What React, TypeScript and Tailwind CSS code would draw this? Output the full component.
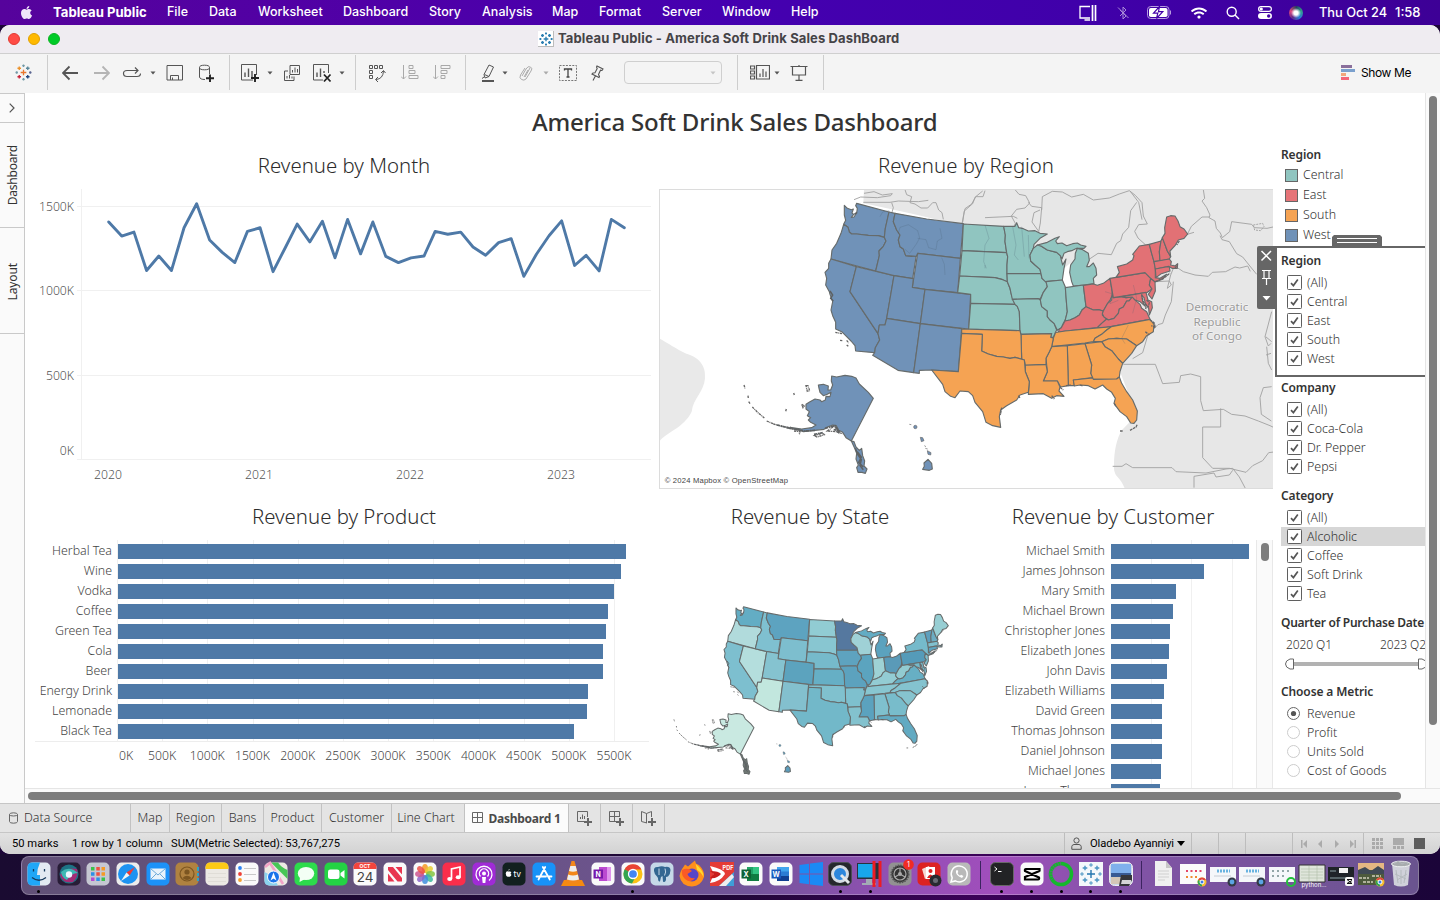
import React from "react";
import { FaApple, FaWifi } from "react-icons/fa";

const BODY = "font-['Noto_Sans',sans-serif]";

/* ---------- geography ---------- */
type Shape = { id: string; region: "W" | "C" | "E" | "S"; tone: string; pts: string };

const WEST: Shape[] = [
  { id: "WA", region: "W", tone: "#63adc4", pts: "313,61 322,70 334,74 340,72 336,84 341,88 334,97 342,96 350,84 352,70 347,62 350,55 447,81 436,130 433,157 415,152 385,151 350,147 335,147 328,141 324,127 311,118 317,106 313,90" },
  { id: "OR", region: "W", tone: "#b1dbdc", pts: "311,118 324,127 328,141 335,147 350,147 385,151 415,152 433,157 438,168 430,184 417,198 418,212 407,258 273,222 276,195 290,175 303,145" },
  { id: "CA", region: "W", tone: "#7dbfcf", pts: "273,222 349,245 330,320 414,446 419,465 406,488 404,503 347,498 345,482 333,468 320,455 305,440 287,432 287,412 278,392 273,375 278,350 270,328 268,320 257,300 260,280 255,262 266,250 266,235" },
  { id: "NV", region: "W", tone: "#b4dedd", pts: "349,245 462,272 440,400 435,420 418,420 414,446 330,320" },
  { id: "ID", region: "W", tone: "#7fc0d0", pts: "447,81 465,85 460,110 470,135 480,150 475,165 480,185 490,192 497,212 515,214 529,210 518,281 462,272 407,258 418,212 417,198 430,184 438,168 433,157 436,130" },
  { id: "MT", region: "W", tone: "#5da3c0", pts: "465,85 560,102 670,116 661,220 533,205 529,214 497,212 490,192 480,185 475,165 480,150 470,135 460,110" },
  { id: "WY", region: "W", tone: "#7dbece", pts: "533,205 661,220 653,323 555,313 517,307" },
  { id: "UT", region: "W", tone: "#85c3d0", pts: "462,272 520,281 517,307 555,313 541,416 440,400" },
  { id: "CO", region: "W", tone: "#5ca3be", pts: "555,313 692,328 686,432 541,416" },
  { id: "AZ", region: "W", tone: "#c2e7de", pts: "440,400 541,416 521,563 474,556 398,511 404,503 406,488 419,465 414,446 418,420 435,420" },
  { id: "NM", region: "W", tone: "#83c0ce", pts: "541,416 665,431 655,560 575,555 538,556 538,565 521,563" },
  { id: "AK", region: "W", tone: "#c9e9e1", pts: "275,573 290,576 315,571 335,574 348,579 358,597 385,622 400,640 334,768 318,758 308,742 296,736 289,722 278,720 262,726 252,733 225,736 190,740 165,730 150,727 185,732 215,728 228,720 212,712 205,705 212,698 202,692 208,680 198,672 198,658 210,650 225,642 240,645 245,650 256,645 258,634 270,635 273,622 262,628 250,632 240,622 237,610 235,600 250,598 265,603 264,615 272,615 278,600 274,588" },
  { id: "AK2", region: "W", tone: "#6f7773", pts: "334,768 342,770 348,786 358,796 365,790 368,812 374,828 372,843 381,852 376,865 366,862 354,862 350,848 355,840 348,822 350,805 344,790" },
  { id: "HI", region: "W", tone: "#5b9dbd", pts: "564,823 575,835 577,852 568,856 548,853 553,844 552,834" },
];

const EAST: Shape[] = [
  { id: "ND", region: "C", tone: "#91ccd3", pts: "10,117 131,124 136,150 135,170 140,203 6,197" },
  { id: "SD", region: "C", tone: "#88c6d1", pts: "6,197 140,203 143,215 141,240 141,268 142,290 128,284 105,278 -1,273" },
  { id: "NE", region: "C", tone: "#76bacb", pts: "-1,273 105,278 128,284 142,290 150,310 154,328 165,358 32,355 32,328 -7,323" },
  { id: "KS", region: "C", tone: "#66afc5", pts: "32,355 165,358 172,364 178,380 180,437 26,432" },
  { id: "MN", region: "C", tone: "#55789f", pts: "131,124 165,124 170,113 176,128 190,131 205,138 225,137 240,145 262,147 240,160 222,178 220,190 210,210 212,228 225,240 240,253 243,266 141,266 141,240 143,215 140,203 135,170 136,150" },
  { id: "IA", region: "C", tone: "#5ea3bf", pts: "141,266 243,266 246,280 258,290 262,305 250,322 241,341 157,343 150,310 142,290" },
  { id: "MO", region: "C", tone: "#5ca2be", pts: "157,343 235,341 241,345 245,365 262,378 262,395 270,405 282,415 290,435 287,440 280,457 272,457 275,446 183,448 180,437 178,380 172,364 165,358" },
  { id: "WI", region: "C", tone: "#9fd1d6", pts: "220,190 232,180 243,183 262,195 290,202 301,212 304,225 308,240 318,222 312,250 307,285 256,290 246,280 243,266 240,253 225,240 212,228 210,210" },
  { id: "UP", region: "C", tone: "#63acc3", pts: "232,180 262,172 285,160 298,155 287,168 292,176 306,174 320,182 338,176 352,174 362,180 378,184 372,190 350,190 335,197 322,200 312,205 306,222 301,212 290,202 262,195 243,183" },
  { id: "MI", region: "C", tone: "#5ba2be", pts: "352,190 368,194 385,205 388,226 380,245 388,245 400,234 408,250 410,270 400,280 402,296 372,300 340,303 335,290 329,262 332,240 345,222 346,205" },
  { id: "IL", region: "C", tone: "#5ba4bf", pts: "258,290 307,285 316,306 320,360 322,380 317,402 310,415 304,428 292,436 282,415 270,405 262,395 262,378 245,365 241,345 250,322 262,305" },
  { id: "IN", region: "C", tone: "#9ed2d5", pts: "316,308 370,300 378,365 366,375 358,390 345,398 330,405 315,408 322,380 320,360" },
  { id: "OH", region: "E", tone: "#5a9ab8", pts: "370,301 400,297 412,301 430,295 450,280 458,330 450,345 443,355 430,378 415,374 400,375 378,365" },
  { id: "KY", region: "E", tone: "#93ccd3", pts: "378,365 400,375 415,374 430,378 427,390 440,402 425,415 412,428 316,438 295,442 298,432 304,428 315,408 330,405 345,398 358,390 366,375" },
  { id: "WV", region: "E", tone: "#92cbd1", pts: "457,322 460,338 486,335 498,338 517,336 507,348 500,348 490,366 478,372 475,385 462,400 445,405 432,396 427,386 430,378 443,355 455,345" },
  { id: "VA", region: "E", tone: "#67afc4", pts: "517,336 524,344 540,358 545,370 560,380 570,403 440,427 412,428 425,415 440,402 445,405 462,400 475,385 478,372 490,366 500,348 507,348" },
  { id: "PA", region: "E", tone: "#559bb9", pts: "450,280 468,277 555,263 572,280 568,300 576,312 562,322 460,338" },
  { id: "NY", region: "E", tone: "#75bacb", pts: "468,277 478,262 472,245 500,237 518,225 522,212 518,208 538,183 568,178 575,205 582,230 586,252 586,278 600,280 620,268 608,283 585,291 572,280 555,263" },
  { id: "NJ", region: "E", tone: "#80c0ce", pts: "572,280 585,291 586,318 576,342 565,328 576,312 568,300" },
  { id: "MD", region: "E", tone: "#75b9c9", pts: "486,335 558,322 564,345 575,350 577,368 568,390 566,370 556,355 552,338 545,330 548,350 556,364 540,350 524,344 517,336 498,338" },
  { id: "VT", region: "E", tone: "#5d9fbd", pts: "568,178 603,168 598,200 600,228 582,230 575,205" },
  { id: "NH", region: "E", tone: "#6cadc3", pts: "603,168 607,158 622,198 632,215 628,222 600,228 598,200" },
  { id: "ME", region: "E", tone: "#97ced3", pts: "607,158 615,145 614,128 620,96 632,92 645,93 654,108 660,125 672,132 683,147 672,160 655,165 645,182 630,198 632,215 622,198" },
  { id: "MA", region: "E", tone: "#80c0ce", pts: "582,230 628,222 634,230 632,240 645,243 653,236 652,250 636,250 626,244 586,252" },
  { id: "CT", region: "E", tone: "#5ea4bf", pts: "586,252 618,246 628,246 630,258 604,266 588,278" },
  { id: "TN", region: "S", tone: "#88c6d0", pts: "287,442 316,438 454,425 440,435 425,448 405,460 400,470 375,474 275,485 280,460" },
  { id: "NC", region: "S", tone: "#84c3cf", pts: "454,425 570,403 582,418 580,440 560,452 548,470 530,482 500,462 470,460 445,462 425,470 400,470 405,460 425,448 440,435" },
  { id: "SC", region: "S", tone: "#86c4cf", pts: "425,470 445,462 470,460 500,462 530,482 515,505 488,535 475,522 455,497 435,485" },
  { id: "GA", region: "S", tone: "#78bccb", pts: "375,476 425,470 435,485 455,497 475,522 488,535 480,560 478,576 470,582 398,583 392,565 395,540" },
  { id: "AL", region: "S", tone: "#7fc0ce", pts: "322,482 375,476 395,540 392,565 398,578 340,585 343,602 330,602 325,602" },
  { id: "MS", region: "S", tone: "#5ba2be", pts: "275,485 322,482 325,602 302,606 292,588 250,588 262,560 258,520 268,500" },
  { id: "FL", region: "S", tone: "#62aac2", pts: "340,585 398,579 400,583 470,582 478,576 485,595 500,620 518,645 532,678 530,705 522,715 512,714 500,695 480,680 462,655 466,640 455,622 440,612 428,600 405,612 385,602 360,600 343,603" },
  { id: "LA", region: "S", tone: "#83c2ce", pts: "196,540 258,538 262,560 250,588 292,588 300,606 297,618 312,634 290,632 275,640 250,626 205,628 208,590 196,560" },
  { id: "AR", region: "S", tone: "#7ec0ce", pts: "183,448 275,446 272,457 280,460 275,485 268,500 258,520 258,538 196,540 193,525 185,522" },
  { id: "OK", region: "S", tone: "#80c1ce", pts: "5,432 180,437 183,450 185,522 165,517 150,520 130,516 110,514 85,507 65,498 67,448 5,445" },
  { id: "TX", region: "S", tone: "#72b8c9", pts: "5,445 67,448 65,498 85,507 110,514 130,516 150,520 165,517 193,525 196,560 208,590 205,622 180,630 170,645 140,662 122,675 118,695 122,727 98,722 78,712 68,680 45,652 38,632 25,620 0,618 -15,638 -28,634 -45,620 -52,598 -85,555 -5,560" },
];

const REGION = { W: "#7092b8", C: "#90c5c0", E: "#e27175", S: "#f5a353" };

function Islands({ fill }: { fill: string }) {
  return (
    <g fill={fill} stroke="#666" strokeWidth="2">
      <circle cx="526" cy="726" r="5" />
      <path d="M508,718l6,1M541,757l7,1l4,9l-8,3zM553,782l5,3M556,790l7,2M562,797l11,6l-1,7l-8,-2z" />
      <path d="M12,600l3,10M24,632l1,8M26,650l5,7M37,666l18,18l18,15M80,708l24,10M100,717l30,7l28,6M140,728l40,8M162,738l18,2l-2,8M198,602l6,0l5,15l-7,2zM161,624l2,6M139,672l-2,7M185,658l8,5l-4,5zM223,752l25,-8l5,5l-22,7zM262,738l20,-14l20,20l-15,-4zM286,442l20,4M300,466l8,1M320,466l6,8M320,480l5,4" fill="none" strokeWidth="4" strokeDasharray="7 2 3 2" />
    </g>
  );
}

function StateShapes({ byRegion }: { byRegion: boolean }) {
  const draw = (s: Shape) => (
    <polygon key={s.id} points={s.pts} fill={byRegion ? REGION[s.region] : s.tone} stroke="#666b6b" strokeWidth={byRegion ? 3.4 : 5} strokeLinejoin="round" />
  );
  return (
    <>
      {WEST.map(draw)}
      <Islands fill={byRegion ? "#7092b8" : "#5b9dbd"} />
      <path d="M346,790l8,20l10,14l-4,18l10,12M352,800l12,16l-8,16l14,14M343,88l8,-6M270,318l8,12l-6,10l8,8" fill="none" stroke="#5d6163" strokeWidth="4.500" />
      <path d="M110,720l40,10l45,8l30,-2M222,748l26,-5M255,730l30,-8l10,14l-14,-2M290,738l10,8" fill="none" stroke="#5d6163" strokeWidth="5" strokeDasharray="10 2 5 1" />
      <g transform="translate(660 0)">
        {EAST.map(draw)}
        <path d="M545,328l4,20l10,14l-2,10M560,345l8,8l-4,14M570,405l12,8l4,15l-12,-6M556,440l12,10M586,290l30,-14l14,-12M645,250l8,-12M658,168l-8,12M300,607l10,8M318,602l14,-2M360,600l8,3M125,668l-4,22M175,632l6,8M275,632l8,10M510,736l18,-10l4,-8M480,738l8,0M463,655l5,10" fill="none" stroke="#666" strokeWidth="4" strokeDasharray="8 2" />
      </g>
    </>
  );
}

function RegionMap() {
  return (
    <svg className="block h-[300px] w-[614px]" viewBox="-243 12 1842 900" preserveAspectRatio="none">
      <rect x="-243" y="12" width="1842" height="900" fill="#fff" />
      <path d="M-243,460 C-190,490 -180,500 -150,510 C-100,530 -105,570 -105,580 C-108,620 -140,640 -145,680 C-170,730 -220,740 -243,770Z" fill="#e9e9e9" />
      <g transform="translate(660 0)">
        <path d="M-288,12H940V912H495C480,870 460,880 462,840C462,800 470,760 486,735L530,690L482,565L480,540L400,320L300,290L0,120L-150,85L-240,65L-290,55Z" fill="#e7e7e7" />
        <path d="M313,250L330,235L345,303L320,308L307,285Z" fill="#fff" />
        <g fill="none" stroke="#a3a3a3" strokeWidth="2.800" strokeLinejoin="round">
          <path d="M-288,25l30,-5l25,10l30,-4l-5,6l-40,6l-50,-2l-20,8M-290,52l80,0l25,-4l60,2l30,-4M-165,14l5,15l15,6l-5,18l15,4l18,12l20,0l15,-16l10,0l8,22l10,8l4,20M-205,53l5,15l-6,20M75,17l-6,18l-22,0l-12,22l-20,14l-4,18l-6,34M8,112l5,-34l25,-22l8,-20l22,-18M165,14l12,14l20,4l12,22l-14,15l-25,4l-16,20l12,22l-6,14M205,52l10,12l30,4l-4,46l-5,26" />
          <path d="M245,75l2,-40l30,-16l30,2l28,15l35,-8l30,17l48,-6l30,-12l30,-10l18,14l20,22l4,40l12,24l-26,2l-12,20l10,20l22,20l6,20M510,18l26,34l10,52M530,52l-18,25l-6,50l-18,20l-6,20l-12,8l-16,34l-40,-4l-30,20M240,75l-18,8l-6,28l20,28M75,98l85,-4l12,6" />
          <path d="M730,14l4,26l-8,8l14,20l10,22l-3,8l18,10l4,22l12,14l6,14l22,-18l6,-30l60,8l8,10l38,2l18,-4M748,96l-22,0l-32,28l-12,24l20,-6M780,152l6,12l22,6l22,36l18,10l24,30l18,22M640,240l30,20l35,10l40,4l12,-12l40,-2l28,-14l14,3l24,-6l8,16M640,250l-8,20l-10,40l12,-10l-6,-12l-40,2M640,290l-6,60l-18,40l-8,25l-14,4l-30,30l-16,54l-30,18" />
          <path d="M880,120l28,-5l4,10l-10,12l-18,-2z" strokeDasharray="6 3" />
          <path d="M490,538h96l22,58l50,-4l4,-20l30,-5l30,8v72l8,30l60,-4l25,15l40,5l40,15l35,14l25,12v20M782,670v56h-54v92l30,32l50,0l50,12l20,-20l30,-15l18,-24l15,-2M458,844l28,0l12,-8l20,12h118l12,12l90,4l60,-12l20,-2l20,26l18,34M702,908v-34l60,-10l6,12l40,-6l10,-14M935,380l-20,75l10,28l8,-8M917,455l18,15M920,485l5,50l10,20M918,510l15,-5M935,605l-25,3l-10,30l4,50l30,20" />
        </g>
      </g>
      <StateShapes byRegion />
      <g fill="none" stroke="#4b5e74" strokeOpacity=".28" strokeWidth="2.400">
        <path d="M475,145l5,-18l25,-8l28,18l6,22l-10,18l-20,28l-14,-12M533,160l25,4l8,24l22,6l4,-26l14,-8l-6,-30M605,218l8,20l2,32M420,95l8,-14l20,-5" />
        <path d="M735,120l12,40l-12,20l-4,50l8,20M818,125l10,55l-5,30l12,15M845,125l8,90M865,150l2,70M735,240v10M1095,320l20,6l-5,30l25,-10M1180,300l10,40l-12,45M1165,420l-20,40l10,16" />
      </g>
      <g className="font-['Noto_Sans',sans-serif]" fill="#9b9b9b" stroke="#f3f3f3" strokeWidth="4" paintOrder="stroke" fontSize="35" textAnchor="middle">
        <text x="1431" y="379">Democratic</text>
        <text x="1431" y="422">Republic</text>
        <text x="1431" y="465">of Congo</text>
      </g>
      <rect x="-240" y="872" width="400" height="38" fill="#fff" fillOpacity=".75" />
      <text x="-226" y="893" fontSize="23" textLength="370" fill="#444" className="font-['Liberation_Sans',sans-serif]">© 2024 Mapbox © OpenStreetMap</text>
      <path d="M-243,13.5H1599M-243,910.5H1599M-241.5,12V912" stroke="#dcdcdc" strokeWidth="3" />
    </svg>
  );
}

function StateMap() {
  return (
    <svg className="block h-[200px] w-[300px]" viewBox="0 0 900 600">
      <g transform="translate(34.3 15.9) scale(.6186 .6205)">
        <StateShapes byRegion={false} />
      </g>
    </svg>
  );
}

/* ---------- charts ---------- */
function MonthLine() {
  return (
    <svg className="block h-[311px] w-[618px]" viewBox="35 179 618 311">
      <path d="M77,206.5H651M77,290.5H651M77,375.5H651M77,459.5H651M81.5,189V460" stroke="#f0f0f0" fill="none" />
      <g transform="translate(90 190) scale(.3603 .36285)">
        <polyline fill="none" stroke="#4e79a7" strokeWidth="8" strokeLinejoin="round" strokeLinecap="round" points="52,88 88,127 122,116 157,222 191,182 226,222 261,104 296,38 332,138 367,172 402,200 437,114 472,104 508,225 543,157 575,94 610,143 645,86 680,187 715,81 751,176 785,88 821,183 856,200 891,187 927,182 958,114 993,122 1029,116 1063,157 1098,180 1134,145 1169,134 1204,238 1239,177 1274,126 1309,85 1345,208 1377,180 1413,223 1447,81 1483,104" />
      </g>
      <g fontSize="12.200" fill="#555" className="font-['Noto_Sans',sans-serif] font-light">
        <g textAnchor="end">
          <text x="74" y="211">1500K</text>
          <text x="74" y="295">1000K</text>
          <text x="74" y="380">500K</text>
          <text x="74" y="455">0K</text>
        </g>
        <g textAnchor="middle">
          <text x="108" y="479">2020</text>
          <text x="259" y="479">2021</text>
          <text x="410" y="479">2022</text>
          <text x="561" y="479">2023</text>
        </g>
      </g>
    </svg>
  );
}

const PRODUCTS: [string, number][] = [["Herbal Tea", 508], ["Wine", 503], ["Vodka", 496], ["Coffee", 490], ["Green Tea", 488], ["Cola", 485], ["Beer", 485], ["Energy Drink", 470], ["Lemonade", 469], ["Black Tea", 456]];
const CUSTOMERS: [string, number][] = [["Michael Smith", 138], ["James Johnson", 93], ["Mary Smith", 65], ["Michael Brown", 62], ["Christopher Jones", 59], ["Elizabeth Jones", 58], ["John Davis", 56], ["Elizabeth Williams", 53], ["David Green", 51], ["Thomas Johnson", 51], ["Daniel Johnson", 51], ["Michael Jones", 50], ["James Thomas", 49]];
const TICKS = ["500K", "1000K", "1500K", "2000K", "2500K", "3000K", "3500K", "4000K", "4500K", "5000K", "5500K"];

function BarRow({ name, w, labelClass }: { name: string; w: number; labelClass: string }) {
  return (
    <div className="flex h-5 shrink-0 items-center">
      <span className={"shrink-0 whitespace-nowrap text-right text-[12.400px] font-light leading-5 text-[#444] " + labelClass}>{name}</span>
      <div className="h-[15px] bg-[#4e79a7]" style={{ width: w }} />
    </div>
  );
}

function ChartTitle({ children }: { children: React.ReactNode }) {
  return <h2 className="flex h-7 shrink-0 items-center justify-center whitespace-nowrap text-[20.400px] font-light text-[#2c2c2c]">{children}</h2>;
}

/* ---------- side filters ---------- */
function SideTitle({ children }: { children: React.ReactNode }) {
  return <div className="h-5 whitespace-nowrap text-[12px] font-semibold leading-5 tracking-[-.12px] text-[#333]">{children}</div>;
}

function Check({ label, active }: { label: string; active?: boolean }) {
  return (
    <div className={"flex h-[19px] items-center gap-[5px] pl-1.5 text-[12.400px] font-light text-[#333] " + (active ? "bg-[#d6d6d6]" : "")}>
      <svg className="size-[15px] shrink-0" viewBox="0 0 15 15">
        <rect x=".5" y=".5" width="14" height="14" rx=".8" fill="#fff" stroke="#5f5f5f" />
        <path d="M4,8.2L6.4,10.6L10.8,4.6" fill="none" stroke="#555" strokeWidth="1.7" />
      </svg>
      <span className="leading-[19px]">{label}</span>
    </div>
  );
}

function Radio({ label, on }: { label: string; on?: boolean }) {
  return (
    <div className="flex h-[19px] items-center gap-[7px] pl-1.5 text-[12.400px] font-light text-[#333]">
      <svg className="size-[13px] shrink-0" viewBox="0 0 13 13">
        <circle cx="6.5" cy="6.5" r="6" fill="#fff" stroke={on ? "#666" : "#ccc"} />
        {on && <circle cx="6.5" cy="6.5" r="2.6" fill="#555" />}
      </svg>
      <span className="leading-[19px]">{label}</span>
    </div>
  );
}

function Legend({ label, color }: { label: string; color: string }) {
  return (
    <div className="flex h-5 items-center gap-[5px] pl-1 text-[12.400px] font-light text-[#333]">
      <svg className="size-[13px]" viewBox="0 0 13 13"><rect x=".5" y=".5" width="12" height="12" fill={color} stroke="#666" /></svg>
      {label}
    </div>
  );
}

function Filters() {
  return (
    <aside className="flex w-[150px] shrink-0 flex-col pt-[52px]">
      <div className="pl-[6px]">
        <SideTitle>Region</SideTitle>
        <Legend label="Central" color="#90c5c0" />
        <Legend label="East" color="#e67478" />
        <Legend label="South" color="#f5a353" />
        <Legend label="West" color="#7092b8" />
      </div>
      <div className="relative mt-px h-[131px] border-y-2 border-l-2 border-[#666] bg-white pl-[4px] pt-[3px]">
        <svg className="absolute -left-[20px] -top-0.5 h-[63px] w-[20px]" viewBox="0 0 20 63">
          <path d="M2,0H20V63H2Q0,63 0,61V2Q0,0 2,0Z" fill="#666" />
          <path d="M4.500,5L14,14.500M14,5L4.500,14.500" stroke="#fff" strokeWidth="1.500" />
          <path d="M5,24.500H14M7,25V32.500M12,25V32.500M5,32.500H14M9.500,33V39" stroke="#fff" strokeWidth="1.200" fill="none" />
          <path d="M5.500,50H13.500L9.500,54.500Z" fill="#fff" />
        </svg>
        <svg className="absolute -top-[13px] left-[55px] h-[12px] w-[50px]" viewBox="0 0 50 12">
          <path d="M2,0H48L50,2V12H0V2Z" fill="#666" />
          <path d="M5,3.500H45M5,7.500H45" stroke="#fff" />
        </svg>
        <SideTitle>Region</SideTitle>
        <div className="pt-0.5">
          <Check label="(All)" /><Check label="Central" /><Check label="East" /><Check label="South" /><Check label="West" />
        </div>
      </div>
      <div className="overflow-hidden pl-[6px]">
        <div className="pt-px"><SideTitle>Company</SideTitle></div>
        <div className="pt-0.5"><Check label="(All)" /><Check label="Coca-Cola" /><Check label="Dr. Pepper" /><Check label="Pepsi" /></div>
        <div className="pt-2.5"><SideTitle>Category</SideTitle></div>
        <div className="pt-0.5"><Check label="(All)" /><Check label="Alcoholic" active /><Check label="Coffee" /><Check label="Soft Drink" /><Check label="Tea" /></div>
        <div className="pt-2.5 tracking-tight"><div className="h-5 whitespace-nowrap text-[12px] font-semibold leading-5 tracking-[-.25px] text-[#333]">Quarter of Purchase Date</div></div>
        <div className="mt-0.5 flex h-5 w-[150px] justify-between whitespace-nowrap pl-[5px] pr-[5px] text-[12px] font-light leading-5 tracking-[-.1px] text-[#333]"><span>2020 Q1</span><span>2023 Q2</span></div>
        <svg className="mt-[3px] block h-3 w-[144px]" viewBox="0 0 144 12">
          <path d="M9,6H140" stroke="#b2b2b2" strokeWidth="4" />
          <path d="M12.500,1V11H9Q4.500,9.500 4.500,6Q4.500,2.500 9,1ZM137.500,1V11H141Q146,9.500 146,6Q146,2.500 141,1Z" fill="#fff" stroke="#666" />
        </svg>
        <div className="pt-[12px]"><SideTitle>Choose a Metric</SideTitle></div>
        <div className="pt-0.5"><Radio label="Revenue" on /><Radio label="Profit" /><Radio label="Units Sold" /><Radio label="Cost of Goods" /></div>
      </div>
    </aside>
  );
}

/* ---------- mac menu bar ---------- */
function MenuBar() {
  return (
    <header className="flex h-[25px] shrink-0 items-center bg-[linear-gradient(90deg,#56039c_0%,#5000a6_25%,#4500b0_50%,#4000aa_75%,#3d0096_100%)] font-['Inter',sans-serif] text-[12.500px] font-medium text-white">
      <FaApple className="ml-[19px] size-[15px] text-[#f0e6fa]" />
      <span className="ml-[19px] w-[94px] whitespace-nowrap text-[13.100px] font-bold">Tableau Public</span>
      <span className="ml-5 w-[22px]">File</span>
      <span className="ml-5 w-[29px]">Data</span>
      <span className="ml-5 w-[65px]">Worksheet</span>
      <span className="ml-5 w-[66px]">Dashboard</span>
      <span className="ml-5 w-[33px]">Story</span>
      <span className="ml-5 w-[50px]">Analysis</span>
      <span className="ml-5 w-[27px]">Map</span>
      <span className="ml-5 w-[43px]">Format</span>
      <span className="ml-5 w-[40px]">Server</span>
      <span className="ml-5 w-[49px]">Window</span>
      <span className="ml-5 w-[29px]">Help</span>
      <svg className="ml-auto h-4 w-[18px]" viewBox="0 0 18 16" fill="none" stroke="#fff" strokeWidth="1.300"><path d="M11,1.500H1V13H11M5.500,15H11" /><path d="M13.500,0V16M16.500,0V16" strokeWidth="1.700" /></svg>
      <svg className="ml-[20px] h-[14px] w-3" viewBox="0 0 12 14" fill="none" stroke="#a98bd8" strokeWidth="1"><path d="M3,4L9,10L6,13V1L9,4L3,10M1,1.500L11.500,12" /></svg>
      <svg className="ml-[18px] h-[13px] w-[25px]" viewBox="0 0 25 13"><rect x=".5" y=".5" width="21.500" height="12" rx="3.200" fill="none" stroke="#b79be0" /><rect x="2" y="2" width="18.500" height="9" rx="1.800" fill="#fff" /><path d="M12.500,.5L6.500,7.200H10.800L9.500,12.500L15.800,5.600H11.500Z" fill="#fff" stroke="#4300a8" strokeWidth="1.200" /><path d="M23.500,4.500V8.500" stroke="#b79be0" /></svg>
      <FaWifi className="ml-[19px] size-[16px]" />
      <svg className="ml-[19px] size-[14px]" viewBox="0 0 14 14" fill="none" stroke="#fff" strokeWidth="1.400"><circle cx="5.700" cy="5.700" r="4.500" /><path d="M9,9L13,13" /></svg>
      <svg className="ml-[18px] h-[13px] w-[14px]" viewBox="0 0 14 13"><rect x=".6" y=".6" width="12.800" height="4.800" rx="2.400" fill="none" stroke="#fff" strokeWidth="1.200" /><circle cx="3.300" cy="3" r="1.600" fill="#fff" /><rect y="7" width="14" height="6" rx="3" fill="#fff" /><circle cx="10.700" cy="10" r="1.700" fill="#4100a5" /></svg>
      <span className="ml-[17px] size-[14px] rounded-full bg-[radial-gradient(circle_at_50%_50%,#fff_0_20%,transparent_50%),conic-gradient(#203f60,#33a28e,#2c79d7,#622d8a,#e0477f,#31405c)]" />
      <span className="ml-[16px] w-[69px] whitespace-nowrap text-[12.800px]">Thu Oct 24</span>
      <span className="mr-[17px] ml-[7px] w-[28px] text-[13px]">1:58</span>
    </header>
  );
}

/* ---------- toolbar ---------- */
const Caret = ({ className }: { className: string }) => (
  <svg className={"h-[4px] w-[6px] " + className} viewBox="0 0 6 4"><path d="M.5,.5H5.500L3,3.600Z" fill="currentColor" /></svg>
);
const Sep = ({ className }: { className: string }) => <span className={"h-[35px] w-px bg-[#cdcdcd] " + className} />;

function Plus({ x, y, s, c }: { x: number; y: number; s: number; c: string }) {
  return <path d={`M${x - s},${y}H${x + s}M${x},${y - s}V${y + s}`} stroke={c} />;
}

function TableauMark({ className, mono }: { className: string; mono?: boolean }) {
  const c = (v: string) => (mono ? "#2d7fb2" : v);
  return (
    <svg className={className} viewBox="0 0 18 18" strokeWidth={mono ? 1.8 : 1.4}>
      <Plus x={9} y={9} s={3} c={c("#e8762c")} />
      <Plus x={4.500} y={4.500} s={1.900} c={c("#eb9129")} /><Plus x={13.500} y={4.500} s={1.900} c={c("#59879b")} />
      <Plus x={4.500} y={13.500} s={1.900} c={c("#c72037")} /><Plus x={13.500} y={13.500} s={1.900} c={c("#1f447e")} />
      <Plus x={9} y={1.800} s={1.300} c={c("#7199a6")} /><Plus x={9} y={16.200} s={1.300} c={c("#7199a6")} />
      <Plus x={1.800} y={9} s={1.300} c={c("#7199a6")} /><Plus x={16.200} y={9} s={1.300} c={c("#5b6591")} />
    </svg>
  );
}

function Toolbar() {
  return (
    <div className="flex h-10 shrink-0 items-center border-t border-[#cfcfcf] bg-[#f4f4f4] pb-[2px] text-[#555]">
      <TableauMark className="ml-[15px] size-[17px]" />
      <Sep className="ml-[15px]" />
      <svg className="ml-[14px] h-4 w-4" viewBox="0 0 16 16" fill="none" stroke="#555" strokeWidth="1.800"><path d="M1,8H16M7.500,1.500L1,8L7.500,14.500" /></svg>
      <svg className="ml-4 h-4 w-4" viewBox="0 0 16 16" fill="none" stroke="#b4b4b4" strokeWidth="1.800"><path d="M0,8H15M8.500,1.500L15,8L8.500,14.500" /></svg>
      <svg className="ml-3 h-3 w-5" viewBox="0 0 20 12" fill="none" stroke="#555" strokeWidth="1.200"><path d="M16,3.500H5Q1.500,3.500 1.500,6.500T5,9.500H15Q18.500,9.500 18.500,6.500M13,.5L16,3.500L13,6.500" /></svg>
      <Caret className="ml-[8px]" />
      <svg className="ml-[10px] size-[17px]" viewBox="0 0 17 17" fill="none" stroke="#555"><path d="M1,1.500H16.500V16H1ZM4.500,16V11.500H12.500V16M6.500,13.500V16" /></svg>
      <svg className="ml-[15px] h-[18px] w-[17px]" viewBox="0 0 17 18" fill="none" stroke="#555"><ellipse cx="6.500" cy="3.500" rx="5" ry="2.300" /><path d="M1.500,3.500V13Q2,15.500 7,15.500M11.500,3.500V10" /><path d="M12,10.500V18M8,14.200H16" strokeWidth="1.900" stroke="#222" /></svg>
      <Sep className="ml-[14px]" />
      <svg className="ml-[10px] size-[20px]" viewBox="0 0 20 20" fill="none" stroke="#555"><path d="M13,17H1.500V1.500H16.500V12" /><path d="M5,14V9.500M8.500,14V5.500M12,14V8" strokeWidth="1.400" /><path d="M15,11V19M11,15H19" strokeWidth="1.900" stroke="#222" /></svg>
      <Caret className="ml-[7px]" />
      <svg className="ml-[10px] size-[18px]" viewBox="0 0 18 18" fill="none" stroke="#555"><path d="M7,1.500H16.500V10.500H7ZM5,7H1.500V16.500H11V12.500M9.500,8.500V6M12,8.500V3.500M14.500,8.500V5M4,14.500V12M6.500,14.500V11M9,14.500V12.500" /></svg>
      <svg className="ml-[11px] size-[20px]" viewBox="0 0 20 20" fill="none" stroke="#555"><path d="M11,17H1.500V1.500H16.500V10" /><path d="M5,14V9.500M8.500,14V5.500M12,10V8" strokeWidth="1.400" /><path d="M12,11.500L18.500,18.500M18.500,11.500L12,18.500" strokeWidth="1.800" stroke="#222" /></svg>
      <Caret className="ml-[7px]" />
      <Sep className="ml-[10px]" />
      <svg className="ml-3 size-[18px]" viewBox="0 0 18 18" fill="none" stroke="#555"><path d="M1.500,1.500h3v3h-3zM6.500,1.500h3v3h-3zM11.500,1.500h3v3h-3zM1.500,6.500h3v3h-3zM1.500,11.500h3v3h-3zM8,15.500Q15,15 15.500,7M13,9L15.500,6.500L17.500,9M10,13L7.500,15.500L10,18" /></svg>
      <svg className="ml-[15px] size-[18px]" viewBox="0 0 18 18" fill="none" stroke="#a9a9a9"><path d="M2.500,1V15M0,12.500L2.500,15L5,12.500M8,1.500h4v3h-4zM8,6.500h6v3h-6zM8,11.500h9v3h-9z" /></svg>
      <svg className="ml-[14px] size-[18px]" viewBox="0 0 18 18" fill="none" stroke="#a9a9a9"><path d="M2.500,1V15M0,12.500L2.500,15L5,12.500M8,1.500h9v3h-9zM8,6.500h6v3h-6zM8,11.500h4v3h-4z" /></svg>
      <Sep className="ml-[14px]" />
      <svg className="ml-[15px] h-[18px] w-[14px]" viewBox="0 0 14 18" fill="none" stroke="#555"><path d="M8,1L12.500,3L8,12.500L4,14L3,10.500ZM3.500,10.500L8,12.500M1,14.500L3,13" /><path d="M1,17H13" strokeWidth="1.800" /></svg>
      <Caret className="ml-[7px]" />
      <svg className="ml-[11px] h-[16px] w-[14px]" viewBox="0 0 14 16" fill="none" stroke="#aaa"><path d="M3,11L7,4Q9,.5 11.500,2T12,6L7,14Q5,16 2.500,14.500T1.500,10L6,3M5,12L9,5M11,3L6,12" /></svg>
      <Caret className="ml-[10px] text-[#aaa]" />
      <svg className="ml-[10px] h-[16px] w-[18px]" viewBox="0 0 18 16" fill="none" stroke="#777"><rect x=".5" y=".5" width="17" height="15" strokeDasharray="2 1.200" /><path d="M5.500,5.500V4H12.500V5.500M9,4V12M7.500,12H10.500" stroke="#444" strokeWidth="1.300" /></svg>
      <svg className="ml-[13px] h-[16px] w-[15px]" viewBox="0 0 15 16" fill="none" stroke="#555" strokeWidth="1.100"><path d="M7,1L13,4L12,5.500L10.500,5.200L8.500,9.500L9.500,11.500L9,12.500L2,9L3,8L5,7.800L7.200,3.500L6.500,2ZM5.500,10.800L3,15.500" /></svg>
      <div className="ml-[19px] flex h-[23px] w-[98px] items-center rounded-sm border border-[#cfcfcf]"><Caret className="ml-auto mr-[5px] text-[#c5c5c5]" /></div>
      <Sep className="ml-[15px]" />
      <svg className="ml-3 h-[15px] w-5" viewBox="0 0 20 15" fill="none" stroke="#555"><path d="M.5,1h4v3h-4zM.5,6h4v3h-4zM.5,11h4v3h-4zM6.500,.5h13v13.500h-13zM10,12V8.500M13,12V4M16,12V6.500" strokeWidth="1.200" /></svg>
      <Caret className="ml-1" />
      <svg className="ml-[10px] h-[16px] w-[18px]" viewBox="0 0 18 16" fill="none" stroke="#555" strokeWidth="1.200"><path d="M.5,1.500H17.500M2.500,1.500V10H15.500V1.500M9,0V1.500M9,10V15M5.500,15.300H12.500" /></svg>
      <Sep className="ml-[15px]" />
      <svg className="ml-auto h-[15px] w-[14px]" viewBox="0 0 14 15"><path d="M0,0H11V3H0Z" fill="#8a6f9b" /><path d="M0,4H14V7H0Z" fill="#7ba0cd" /><path d="M0,8H5V11H0Z" fill="#f2a77d" /><path d="M0,12H8V15H0Z" fill="#f4667a" /></svg>
      <span className="mr-[29px] ml-[6px] w-[50px] whitespace-nowrap font-['Inter',sans-serif] text-[12px] tracking-[-.4px] text-black">Show Me</span>
    </div>
  );
}

/* ---------- worksheet tabs ---------- */
function Tabs() {
  const tab = "flex h-full items-center justify-center whitespace-nowrap border-r border-[#c2c2c2] pt-px ";
  return (
    <div className="flex h-[30px] shrink-0 items-center border-y border-[#c6c6c6] bg-[#e4e4e4] text-[12.400px] font-light text-[#333]">
      <div className="flex h-full w-[131px] items-center gap-[6px] border-r border-[#c2c2c2] pl-[9px] pt-px">
        <svg className="mb-0.5 h-3 w-[9px]" viewBox="0 0 9 12" fill="none" stroke="#666"><path d="M.5,2.500Q.5,.8 4.500,.8T8.500,2.500V9.500Q8.500,11.200 4.500,11.200T.5,9.500ZM.5,2.500Q.5,4 4.500,4T8.500,2.500" /></svg>
        Data Source
      </div>
      <div className={tab + "w-[39px]"}>Map</div>
      <div className={tab + "w-[52px]"}>Region</div>
      <div className={tab + "w-[42px]"}>Bans</div>
      <div className={tab + "w-[58px]"}>Product</div>
      <div className={tab + "w-[70px]"}>Customer</div>
      <div className={tab + "w-[73px] pr-1"}>Line Chart</div>
      <div className={tab + "w-[104px] gap-[5px] bg-[#fbfbfb] text-[12px] font-bold tracking-[-.25px]"}>
        <svg className="mb-0.5 size-[11px]" viewBox="0 0 11 11" fill="none" stroke="#666"><path d="M.5,.5H10.500V10.500H.5ZM.5,5.500H10.500M5.500,.5V10.500" /></svg>
        <span className="text-[#4a4a4a]">Dashboard 1</span>
      </div>
      <div className={tab + "w-8"}><svg className="h-[15px] w-[16px]" viewBox="0 0 16 15" fill="none" stroke="#666"><path d="M7,10.500H.5V.5H10.500V6M3.500,8V6M5.500,8V3.500M7.500,8V5" /><path d="M11,7V15M7,11H15" strokeWidth="2" /></svg></div>
      <div className={tab + "w-8"}><svg className="h-[15px] w-[16px]" viewBox="0 0 16 15" fill="none" stroke="#666"><path d="M7,10.500H.5V.5H10.500V6M.5,5.500H10.500M5.500,.5V10.500" /><path d="M11,7V15M7,11H15" strokeWidth="2" /></svg></div>
      <div className={tab + "w-8"}><svg className="h-[15px] w-[16px]" viewBox="0 0 16 15" fill="none" stroke="#666"><path d="M6,12L.5,10.500V.5L5.500,2.500L10.500,.5V6M5.500,2.500V12" /><path d="M11,7V15M7,11H15" strokeWidth="2" /></svg></div>
    </div>
  );
}

function StatusBar() {
  const v = "h-full w-px shrink-0 bg-[#bdbdbd] ";
  return (
    <div className="flex h-[21px] shrink-0 items-center bg-[linear-gradient(#e2e2e2,#d2d2d2)] font-['Roboto',sans-serif] text-[11.200px] text-black">
      <span className="ml-3 w-[60px] whitespace-nowrap pt-px">50 marks</span>
      <span className="w-[99px] whitespace-nowrap pt-px">1 row by 1 column</span>
      <span className="whitespace-nowrap pt-px">SUM(Metric Selected): 53,767,275</span>
      <span className={v + "ml-auto"} />
      <svg className="ml-[6px] h-[13px] w-[11px] shrink-0" viewBox="0 0 11 13" fill="none" stroke="#555"><circle cx="5.500" cy="3.500" r="2.600" /><path d="M.8,12.300V9.500Q1,7.800 3,7.500H8Q10,7.800 10.200,9.500V12.300Z" /></svg>
      <span className="ml-[8px] w-[79px] shrink-0 whitespace-nowrap pt-px tracking-[-.1px]">Oladebo Ayanniyi</span>
      <svg className="ml-[8px] h-[5px] w-[8px] shrink-0" viewBox="0 0 8 5"><path d="M0,0H8L4,5Z" /></svg>
      <span className={v + "ml-[6px]"} /><span className={v + "ml-[26px]"} /><span className={v + "ml-[26px]"} /><span className={v + "ml-[46px]"} />
      <svg className="ml-2 h-2 w-[55px]" viewBox="0 0 55 8" fill="#ababab"><path d="M0,0H1.500V8H0ZM6,0V8L2,4ZM21,0V8L17,4ZM34,0V8L38,4ZM49,0V8L53,4ZM53.500,0H55V8H53.500Z" /></svg>
      <span className={v + "ml-[7px]"} />
      <svg className="ml-2 h-[11px] w-[11px]" viewBox="0 0 11 11" fill="#aaa"><path d="M0,0h3v3h-3zM4,0h3v3h-3zM8,0h3v3h-3zM0,4h3v3h-3zM4,4h3v3h-3zM8,4h3v3h-3zM0,8h3v3h-3zM4,8h3v3h-3zM8,8h3v3h-3z" /></svg>
      <svg className="ml-[10px] h-[11px] w-[11px]" viewBox="0 0 11 11" fill="#aaa"><path d="M0,0h11v7h-11zM0,8h3v3h-3zM4,8h3v3h-3zM8,8h3v3h-3z" /></svg>
      <span className="mr-[15px] ml-[10px] size-[11px] bg-[#5d5d5d]" />
    </div>
  );
}

/* ---------- dock ---------- */
const R = ({ f, s }: { f: string; s?: string }) => <rect x=".5" y=".5" width="23" height="23" rx="5" fill={f} stroke={s} />;

const DOCK: { art: React.ReactNode; run?: boolean; sepAfter?: boolean }[] = [
  { run: true, art: <><R f="#e3eaf2" /><path d="M5.500,.5H13Q10,7 10,13H13V23.500H5.500Q.5,23.500 .5,18.500V5.500Q.5,.5 5.500,.5Z" fill="#1fa7f7" /><path d="M6.500,7V9.500M17.500,7V9.500M5,15.500Q12,21 19,15.500" stroke="#173a5c" strokeWidth="1.300" fill="none" /></> },
  { art: <><R f="#271c36" /><circle cx="12" cy="12" r="9.500" fill="#1d7385" /><path d="M3,13Q8,5 20,7Q22,14 16,20Q6,22 3,13" fill="#a32c76" /><path d="M4,10Q12,3 21,11Q14,11 10,18Q5,16 4,10" fill="#3eb8b4" /><circle cx="12" cy="12.500" r="3.200" fill="#eaf6ff" /></> },
  { art: <><R f="#c5c7d2" /><path d="M5,5h3.500v3.500h-3.500zM15.500,15.500h3.500v3.500h-3.500z" fill="#3ac24a" /><path d="M10.300,5h3.500v3.500h-3.500zM10.300,10.200h3.500v3.500h-3.500z" fill="#ee5041" /><path d="M15.500,5h3.500v3.500h-3.500zM15.500,10.200h3.500v3.500h-3.500z" fill="#f49a25" /><path d="M5,10.200h3.500v3.500h-3.500zM10.300,15.500h3.500v3.500h-3.500z" fill="#2d8fe6" /><path d="M5,15.500h3.500v3.500h-3.500z" fill="#b44ad0" /></> },
  { art: <><R f="#ececec" /><circle cx="12" cy="12" r="10" fill="#1d93f1" /><path d="M19,5L13.500,13.500L10.500,10.500Z" fill="#f13b34" /><path d="M5,19L13.500,13.500L10.500,10.500Z" fill="#f4f4f4" /></> },
  { art: <><R f="#1c92f8" /><path d="M4.500,6.500H19.500V17.500H4.500Z" fill="#e9f3fb" /><path d="M4.500,6.500L12,13L19.500,6.500M4.500,17.500L10,12M19.500,17.500L14,12" fill="none" stroke="#6aa9d8" /></> },
  { art: <><R f="#b08240" /><path d="M23,5v4M23,11v3M23,16v3" stroke="#2aa4c8" strokeWidth="2" /><circle cx="12" cy="12" r="7" fill="none" stroke="#7c5621" strokeWidth="1.200" /><circle cx="12" cy="10" r="2.600" fill="#7c5621" /><path d="M7.500,16Q12,11.500 16.500,16Q12,20 7.500,16" fill="#7c5621" /></> },
  { art: <><R f="#ece9e4" /><path d="M.5,7V5.500Q.5,.5 5.500,.5H18.500Q23.500,.5 23.500,5.500V7Z" fill="#fcca16" /><path d="M3,11.500H21M3,15.500H21M3,19.500H21" stroke="#d8d5cf" strokeWidth=".6" /></> },
  { art: <><R f="#fafafa" /><circle cx="5" cy="6" r="1.900" fill="#2c84f5" /><circle cx="5" cy="12" r="1.900" fill="#ee4035" /><circle cx="5" cy="18" r="1.900" fill="#f7a12e" /><path d="M9,6.500H21M9,12.500H21M9,18.500H21" stroke="#c9c9c9" /></> },
  { art: <><R f="#eceae4" /><path d="M.5,10Q10,14 14,23.500H5Q.5,23 .5,19Z" fill="#8ad3ee" /><path d="M7,.5L23.500,17V8Q17,5 14,.5Z" fill="#48c656" /><path d="M1,5L6,1L19,22" stroke="#f2a3c7" strokeWidth="2.600" fill="none" /><circle cx="9.500" cy="15" r="6" fill="#1a73ea" stroke="#fff" /><path d="M9.500,10.500L12.500,18.500L9.500,16.500L6.500,18.500Z" fill="#fff" /></> },
  { art: <><R f="#2ddb4c" /><ellipse cx="12" cy="11.500" rx="8.200" ry="6.600" fill="#f3fff5" /><path d="M6,15L5.500,20L11,17Z" fill="#f3fff5" /></> },
  { art: <><R f="#24d344" /><rect x="4" y="7.500" width="11.500" height="9.500" rx="2.300" fill="#fff" /><path d="M16.500,11L20.500,8V16.500L16.500,13.500Z" fill="#fff" /></> },
  { art: <><R f="#fafafa" /><path d="M.5,7V5.500Q.5,.5 5.500,.5H18.500Q23.500,.5 23.500,5.500V7Z" fill="#f2453d" /><text x="12" y="5.800" fontSize="5" fontWeight="700" fill="#fff" textAnchor="middle" className="font-['Inter',sans-serif]">OCT</text><text x="12" y="20" fontSize="13.500" fill="#444" textAnchor="middle" className="font-['Inter',sans-serif]">24</text></> },
  { art: <><R f="#fafafa" /><path d="M5,5H10L19,16V19.500H14.500L5,8ZM12.500,5H19V12.500ZM5,11.500V19.500H11.500Z" fill="#e8354f" /></> },
  { art: <><R f="#fafafa" /><g fillOpacity=".85"><ellipse cx="12" cy="6.500" rx="3" ry="4.500" fill="#f59a23" /><ellipse cx="16" cy="8" rx="3" ry="4.500" transform="rotate(45 16 8)" fill="#e6cf33" /><ellipse cx="17.500" cy="12" rx="4.500" ry="3" fill="#84c441" /><ellipse cx="16" cy="16" rx="3" ry="4.500" transform="rotate(-45 16 16)" fill="#3bb99e" /><ellipse cx="12" cy="17.500" rx="3" ry="4.500" fill="#3e8ddd" /><ellipse cx="8" cy="16" rx="3" ry="4.500" transform="rotate(45 8 16)" fill="#8a65c9" /><ellipse cx="6.500" cy="12" rx="4.500" ry="3" fill="#cb568f" /><ellipse cx="8" cy="8" rx="3" ry="4.500" transform="rotate(-45 8 8)" fill="#ed5147" /></g></> },
  { art: <><R f="#fa2e4b" /><path d="M9.500,17V7L18,5V15" stroke="#fff" strokeWidth="1.700" fill="none" /><ellipse cx="7.700" cy="17" rx="2.500" ry="2" fill="#fff" /><ellipse cx="16.200" cy="15.200" rx="2.500" ry="2" fill="#fff" /></> },
  { art: <><R f="#a02bd6" /><g fill="none" stroke="#fff" strokeWidth="1.300"><path d="M7,18.500A8,8 0 1 1 17,18.500M8.500,14.500A4.600,4.600 0 1 1 15.500,14.500" /></g><circle cx="12" cy="11.500" r="2" fill="#fff" /><path d="M10,15H14L13.300,21H10.700Z" fill="#fff" /></> },
  { art: <><R f="#12201f" /><path d="M7.500,9.500q-1,.1 -1.300,-.1q-2.300,-.5 -2.500,2.100q.2,3 2,3.300q1,-.3 2,0q1.500,-.5 1.800,-2q-1.700,-1.100 -.1,-2.600q-.8,-.9 -1.900,-.7zM6.300,8.700q.1,-1.300 1.400,-1.700q0,1.400 -1.400,1.700z" fill="#fff" /><text x="15.300" y="15" fontSize="8.500" fill="#fff" textAnchor="middle" className="font-['Inter',sans-serif]">tv</text></> },
  { art: <><R f="#1892f8" /><path d="M13.200,5L6.500,17.500M10.800,5L17.800,17.500M4.500,14.500H14M16.500,14.500H19.500" stroke="#fff" strokeWidth="1.800" strokeLinecap="round" /></> },
  { art: <><path d="M3,18H21L24,24H0Z" fill="#f58a10" /><path d="M10.500,-1H13.500L19,20Q12,23 5,20Z" fill="#f3871a" /><path d="M9.300,4H14.700L16,9Q12,10.500 8,9ZM7.200,12.500Q12,14.500 16.800,12.500L18,17.500Q12,19.500 6,17.500Z" fill="#eee" /></> },
  { art: <><R f="#fafafa" /><path d="M8,5H20V19H8Z" fill="#bb4ad0" /><path d="M16,5H20V19H16Z" fill="#df93ec" /><path d="M2.500,7.500H12V16.500H2.500Z" fill="#7719aa" /><text x="7.200" y="14.700" fontSize="7" fontWeight="700" fill="#fff" textAnchor="middle" className="font-['Inter',sans-serif]">N</text></> },
  { run: true, art: <><R f="#fafafa" /><circle cx="12" cy="12" r="9.500" fill="#fbc116" /><path d="M12,12L3.500,7.500A9.500,9.500 0 0 1 20.500,7.500H12Z" fill="#e94335" /><path d="M12,12L3.700,7.300A9.500,9.500 0 0 0 11,21.500L15,14Z" fill="#34a551" /><circle cx="12" cy="12" r="4.500" fill="#4286f5" stroke="#fff" strokeWidth="1.300" /></> },
  { art: <><R f="#c6d9e8" /><path d="M4,9Q3.500,4.500 8,5Q12,3.500 15,5Q20,4 20.500,8Q20.500,12 18,14.500L16,15V18Q15,21 13,19.500L12.500,14L11,15L10,19.500Q8,20 8,16L7,14.500Q4.500,13 4,9Z" fill="#336791" /><path d="M9,6.500V13M15,6.500Q16.500,10 14.500,13.500" stroke="#c6d9e8" fill="none" /></> },
  { art: <><path d="M2,7Q4,4 5,2.500L8,4.500Q13,0 15,-1.500Q15,2 19,3Q25,9 24,15Q21,24 12,24.500Q1,24 -.5,14Q0,10 2,7Z" fill="#ff8f1c" /><path d="M15,-1.500Q15,2 18,4Q24,10 23.500,15Q21,10 17,8Z" fill="#ffdb2e" /><circle cx="12" cy="13" r="6.500" fill="#5845c8" /><path d="M2,8Q8,5 12,9L7.500,12Q9,17 15,16Q11,22 5,17Q1,13 2,8Z" fill="#fb5a26" /></> },
  { art: <><path d="M0,0H24V24H0Z" fill="#e53c35" /><path d="M0,4Q14,7 15,12Q10,20 0,21L4,12Z" fill="#fff" /><path d="M0,9Q9,9 11,12Q7,17 0,16L4,12Z" fill="#c81e1b" /><path d="M9,24L24,10V24Z" fill="#3f9ed8" /><path d="M9,24L22,12L24,15L16,24Z" fill="#eee" /><text x="18" y="7.500" fontSize="5.500" fontWeight="700" fill="#fff" textAnchor="middle" className="font-['Inter',sans-serif]">PDF</text></> },
  { art: <><R f="#fafafa" /><path d="M8,5H20V19H8Z" fill="#21a366" /><path d="M14,5H20V12H14Z" fill="#33c481" /><path d="M8,12H20V19H8Z" fill="#107c41" /><path d="M2.500,7.500H12V16.500H2.500Z" fill="#0d6235" /><text x="7.200" y="14.700" fontSize="7" fontWeight="700" fill="#fff" textAnchor="middle" className="font-['Inter',sans-serif]">X</text></> },
  { art: <><R f="#fafafa" /><path d="M8,5H20V19H8Z" fill="#2b7cd3" /><path d="M8,5H20V9.500H8Z" fill="#41a5ee" /><path d="M8,14H20V19H8Z" fill="#103f91" /><path d="M2.500,7.500H12V16.500H2.500Z" fill="#185abd" /><text x="7.200" y="14.700" fontSize="7" fontWeight="700" fill="#fff" textAnchor="middle" className="font-['Inter',sans-serif]">W</text></> },
  { art: <path d="M.5,3L10,1.700V11.500H.5ZM11,1.500L24,0V11.500H11ZM.5,12.500H10V22.300L.5,21ZM11,12.500H24V24L11,22.500Z" fill="#1b8af5" /> },
  { run: true, art: <><R f="#26282d" s="#4b4e55" /><circle cx="12" cy="12" r="7.500" fill="#2c86dc" stroke="#d4dbe4" strokeWidth="3" /><path d="M13,13L21,21" stroke="#e4e7ea" strokeWidth="3" /></> },
  { run: true, art: <><path d="M-1,1H22V17H-1Z" fill="#29323d" /><path d="M0,2H16V15.500H0Z" fill="#18a7ec" /><path d="M8,17H14V21H18V23H4V21H8Z" fill="#a3abb5" /><path d="M16,-1V25M22,-1V25" stroke="#ec1c24" strokeWidth="3" /></> },
  { art: <><R f="#929292" /><circle cx="12" cy="12" r="8.500" fill="#333" stroke="#555" strokeWidth="2" strokeDasharray="1.500 1" /><circle cx="12" cy="12" r="6" fill="none" stroke="#aaa" strokeWidth="1.200" /><circle cx="12" cy="12" r="2" fill="#aaa" /><path d="M12,12V6M12,12L7,15M12,12L17,15" stroke="#aaa" strokeWidth="1.200" /><circle cx="20.500" cy="2.500" r="5.300" fill="#f02b24" /><text x="20.500" y="5" fontSize="7" fill="#fff" textAnchor="middle" className="font-['Inter',sans-serif]">1</text></> },
  { art: <><R f="#dd2222" /><path d="M5,7L12,4L15,14L8,17Z" fill="#f5d8d4" /><rect x="9" y="5" width="9" height="12" fill="#fff" /><circle cx="13.500" cy="9" r="2" fill="#dd2222" /><path d="M10,16Q13.500,9 17,16Z" fill="#dd2222" /><circle cx="18.500" cy="18.500" r="6" fill="#282a2f" /><circle cx="18.500" cy="18.500" r="2.500" fill="#686a73" /></> },
  { sepAfter: true, art: <><R f="#b9b9b9" /><path d="M4,20L5.200,15.800A8,8 0 1 1 8.300,18.900Z" fill="none" stroke="#fff" strokeWidth="1.500" /><path d="M9,8.500Q8,13 15,16L16.500,14L14,12.700L13,13.700Q11,12.500 10.500,11L11.300,10L10.500,8Z" fill="#fff" /></> },
  { run: true, art: <><R f="#222325" s="#686868" /><path d="M4.500,5L7,7L4.500,9M8,9.500H11.500" stroke="#fff" fill="none" /></> },
  { run: true, art: <><R f="#fafafa" /><path d="M19.500,9.500V7H6Q4.500,7 5,9L19,15.500Q19.500,17.500 18,17.500H5V15L19.500,9" fill="none" stroke="#000" strokeWidth="2.200" /></> },
  { run: true, art: <><circle cx="12" cy="12" r="10.500" fill="none" stroke="#14b82c" strokeWidth="3.600" /><path d="M12,1.500A10.500,10.500 0 0 0 4,19" fill="none" stroke="#7a5794" strokeWidth="3.800" strokeDasharray=".5 2.200" /></> },
  { run: true, art: <><path d="M0,0H24V24H0Z" fill="#f4f8fb" /><g strokeWidth="1.400"><Plus x={12} y={12} s={4} c="#2376b0" /><Plus x={6} y={6} s={2.300} c="#4a93c2" /><Plus x={18} y={6} s={2.300} c="#4a93c2" /><Plus x={6} y={18} s={2.300} c="#4a93c2" /><Plus x={18} y={18} s={2.300} c="#4a93c2" /><Plus x={12} y={3} s={1.700} c="#69a6cd" /><Plus x={12} y={21} s={1.700} c="#69a6cd" /><Plus x={3} y={12} s={1.700} c="#69a6cd" /><Plus x={21} y={12} s={1.700} c="#69a6cd" /></g></> },
  { run: true, sepAfter: true, art: <><R f="#cbd9ec" s="#eee" /><path d="M2,2H22V13H2Z" fill="#7fb0ec" /><path d="M2,11H22V15H2Z" fill="#385a93" /><path d="M2,15H22V22H2Z" fill="#d4c7b7" /><path d="M12,13H23V18L20,24H10Z" fill="#35363b" /><path d="M13,18H22V22H12Z" fill="#d4d4d6" /></> },
  { art: <><path d="M4,-1H15L21,6V24H4Z" fill="#f0f0f0" /><path d="M15,-1V6H21Z" fill="#c7c7c7" /><path d="M7,9H18M7,12H18M7,15H18M7,18H14" stroke="#d0d0d0" /></> },
  { art: <><path d="M-1,2H25V22H-1Z" fill="#fbfbfb" /><path d="M5,9h2M9.500,9h2M14,9h2M18.500,9h2" stroke="#e44669" strokeWidth="2" /><path d="M5,15h2M9.500,15h2M14,15h2" stroke="#ef8b30" strokeWidth="2" /><circle cx="21" cy="20" r="4.500" fill="#f4bb2f" /><path d="M17,18A4.500,4.500 0 0 1 25,18Z" fill="#e0493f" /><path d="M17,18A4.500,4.500 0 0 0 21,24.500V20Z" fill="#34a551" /><circle cx="21" cy="20" r="2" fill="#3c7cea" stroke="#fff" /></> },
  { art: <><path d="M-1,5H25V20H-1Z" fill="#f5f7fa" /><path d="M6,9h13" stroke="#69b3e0" strokeWidth="3" strokeDasharray="2 1" /><path d="M3,14H20" stroke="#c6ccd4" /><circle cx="21" cy="20" r="4.500" fill="#343a46" /><circle cx="21" cy="20" r="2.400" fill="#5ba5e4" /></> },
  { art: <><path d="M-1,5H25V20H-1Z" fill="#f5f7fa" /><path d="M6,9h13" stroke="#69b3e0" strokeWidth="3" strokeDasharray="2 1" /><path d="M3,14H20" stroke="#c6ccd4" /><circle cx="21" cy="20" r="4.500" fill="#343a46" /><circle cx="21" cy="20" r="2.400" fill="#5ba5e4" /></> },
  { art: <><path d="M-1,5H25V20H-1Z" fill="#f5f7fa" /><path d="M2,9h20M2,14h14" stroke="#738c8d" strokeWidth="1.500" strokeDasharray="2 3" /><circle cx="21" cy="20" r="4" fill="none" stroke="#21bf3a" strokeWidth="2" /></> },
  { art: <><path d="M-1,3H25V20H-1Z" fill="#dfe5db" stroke="#333" /><path d="M1,7H23M1,10H23M1,13H23M1,16H23M9,4V19M17,4V19" stroke="#aebcaa" strokeWidth=".6" /><text x="14" y="25" fontSize="6" fill="#fff" textAnchor="middle" className="font-['Inter',sans-serif]">python...</text></> },
  { art: <><path d="M-1,5H25V19H-1Z" fill="#1f2429" /><path d="M10,6H19V11H10Z" fill="#f2f2f2" /><path d="M1,9H7M1,16H23" stroke="#8ca0a5" /><rect x="16" y="15" width="9" height="9" rx="2" fill="#f8f8f8" /><path d="M23,17.500h-5l5,4h-5l5,-3" stroke="#111" fill="none" /></> },
  { art: <><path d="M-1,1H25V23H-1Z" fill="#4d5a3c" /><path d="M-1,1H25V8H-1Z" fill="#e5b782" /><path d="M-1,8L6,5L12,9L19,4L25,8V12H-1Z" fill="#404a55" /><path d="M0,16h10M4,20h10M13,14h9" stroke="#d1cfbb" strokeWidth="1.500" strokeDasharray="3 1" /><circle cx="21" cy="20" r="4.500" fill="#f4bb2f" /><path d="M17,18A4.500,4.500 0 0 1 25,18Z" fill="#e0493f" /><path d="M17,18A4.500,4.500 0 0 0 21,24.500V20Z" fill="#34a551" /><circle cx="21" cy="20" r="2" fill="#3c7cea" stroke="#fff" /></> },
  { art: <><path d="M3,1H21L19,23Q12,26 5,23Z" fill="#dcdfe2" fillOpacity=".9" /><ellipse cx="12" cy="2" rx="9.500" ry="2.800" fill="#a7abad" stroke="#eef0f1" /><path d="M5,2l4,-3l4,3l4,-2l2,2M7,8L9,21M12,8V22M17,8L15,21M6,12L17,17M18,12L8,18" stroke="#b5babe" fill="none" /></> },
];

function Dock() {
  return (
    <div className="flex h-[46px] shrink-0 items-start bg-[linear-gradient(90deg,#1a0b31_0%,#200737_50%,#3b0258_68%,#20053c_85%,#1b0539_100%)] pt-[2px]">
      <div className="ml-[21px] flex h-[39px] w-[1398px] items-start rounded-lg border border-white/25 bg-[linear-gradient(90deg,#615077_0%,#65537d_30%,#72549a_52%,#9350b5_63%,#a14ebc_70%,#8353a8_78%,#6a548f_100%)] pl-[2px]">
        {DOCK.map((d, i) => (
          <React.Fragment key={i}>
            <div className="flex w-[29.690px] shrink-0 flex-col items-center pt-[5px]">
              <svg className="size-[24px] overflow-visible" viewBox="0 0 24 24">{d.art}</svg>
              <span className={"mt-[4px] size-[3px] rounded-full " + (d.run ? "bg-black" : "bg-transparent")} />
            </div>
            {d.sepAfter && <span className="mx-[6px] mt-1 h-7 w-px shrink-0 bg-[#3c2460]" />}
          </React.Fragment>
        ))}
      </div>
    </div>
  );
}

/* ---------- page ---------- */
export default function App() {
  return (
    <div className="flex h-[900px] w-[1440px] flex-col overflow-hidden bg-[#1d0638]">
      <MenuBar />
      <div className={"flex h-[829px] shrink-0 flex-col overflow-hidden rounded-[10px] bg-white " + BODY}>
        <div className="flex h-[28px] shrink-0 items-center bg-[#efecf1]">
          <span className="ml-2 size-3 rounded-full border border-[#e13a32] bg-[#ff4b45]" />
          <span className="ml-2 size-3 rounded-full border border-[#e0a000] bg-[#ffb900]" />
          <span className="ml-2 size-3 rounded-full border border-[#0db324] bg-[#00cb27]" />
          <span className="ml-[478px] flex size-[16px] items-center justify-center border-b border-r border-[#bbb] bg-white"><TableauMark className="size-[14px]" mono /></span>
          <span className="ml-[4px] whitespace-nowrap font-['Inter',sans-serif] text-[13px] font-bold tracking-[.12px] text-[#454347]">Tableau Public - America Soft Drink Sales DashBoard</span>
        </div>
        <Toolbar />
        <div className="flex h-[710px] shrink-0">
          <nav className="flex w-[25px] shrink-0 flex-col items-center border-r border-t border-[#c9c9c9] bg-[#fafafa] text-[12px] text-[#333]">
            <div className="flex h-[29px] w-full items-center justify-center border-b border-[#c9c9c9]"><svg className="h-[10px] w-[6px]" viewBox="0 0 6 10" fill="none" stroke="#555" strokeWidth="1.200"><path d="M.7,.7L5,5L.7,9.300" /></svg></div>
            <div className="flex h-[105px] w-full items-center justify-center border-b border-[#c9c9c9] pl-0.5"><span className="rotate-180 tracking-[-.2px] [writing-mode:vertical-rl]">Dashboard</span></div>
            <div className="flex h-[106px] w-full items-center justify-center border-b border-[#c9c9c9] pl-0.5 pt-0.5"><span className="rotate-180 tracking-[-.1px] [writing-mode:vertical-rl]">Layout</span></div>
          </nav>
          <div className="flex w-[1415px] flex-col">
            <div className="flex h-[695px]">
              <main className="flex w-[1250px] shrink-0 flex-col overflow-hidden">
                <h1 className="flex h-[58px] shrink-0 items-center whitespace-nowrap pl-[507px] font-['Noto_Sans',sans-serif] text-[24px] font-medium tracking-[-.2px] text-[#333]">America Soft Drink Sales Dashboard</h1>
                <div className="flex h-[351px] shrink-0 pl-2.5">
                  <section className="w-[624px] shrink-0 pr-1.5">
                    <ChartTitle>Revenue by Month</ChartTitle>
                    <MonthLine />
                  </section>
                  <section className="w-[614px] shrink-0">
                    <ChartTitle>Revenue by Region</ChartTitle>
                    <div className="pt-[10px]"><RegionMap /></div>
                  </section>
                </div>
                <div className="flex h-[286px] shrink-0 pl-2.5">
                  <section className="flex w-[618px] shrink-0 flex-col">
                    <ChartTitle>Revenue by Product</ChartTitle>
                    <div className="mt-[10px] w-[614px] border-b border-[#ededed] bg-[repeating-linear-gradient(90deg,#f0f0f0_0_1px,transparent_1px_45.200px)] bg-[position:82px_0] bg-no-repeat pt-px">
                      {PRODUCTS.map(([n, w]) => <BarRow key={n} name={n} w={w} labelClass="w-[83px] pr-[6px]" />)}
                    </div>
                    <div className="flex pt-[4px] text-[12.200px] font-light leading-5 text-[#444]">
                      <span className="ml-[84px] w-[20.500px]">0K</span>
                      {TICKS.map((t) => <span key={t} className="flex w-[45.200px] shrink-0 justify-center">{t}</span>)}
                    </div>
                  </section>
                  <section className="flex w-[312px] shrink-0 flex-col items-center">
                    <div className="pl-[2px]"><ChartTitle>Revenue by State</ChartTitle></div>
                    <div className="mt-[60px] pl-[2px]"><StateMap /></div>
                  </section>
                  <section className="flex w-[311px] shrink-0 flex-col">
                    <div className="pr-[15px]"><ChartTitle>Revenue by Customer</ChartTitle></div>
                    <div className="flex h-[258px] overflow-hidden pt-[10px]">
                      <div className="flex w-[291px] shrink-0 flex-col overflow-hidden bg-[linear-gradient(90deg,transparent_186px,#f0f0f0_186px_187px,transparent_187px_226px,#f0f0f0_226px_227px,transparent_227px_267px,#f0f0f0_267px_268px,transparent_268px)] pt-px">
                        {CUSTOMERS.map(([n, w]) => <BarRow key={n} name={n} w={w} labelClass="w-[146px] pr-[6px]" />)}
                      </div>
                      <div className="flex w-[17px] justify-center border-x border-[#e8e8e8] bg-[#fafafa] pt-[3px]"><span className="h-[18px] w-2 rounded-full bg-[#7d7d7d]" /></div>
                    </div>
                  </section>
                </div>
              </main>
              <Filters />
              <div className="flex w-[15px] shrink-0 justify-center border-l border-[#e5e5e5] bg-[#fafafa] pt-[3px]"><span className="h-[629px] w-2 rounded-full bg-[#7d7d7d]" /></div>
            </div>
            <div className="flex h-[15px] items-center border-t border-[#e5e5e5] bg-[#fafafa] pl-[3px]"><span className="h-2 w-[1373px] rounded-full bg-[#7d7d7d]" /></div>
          </div>
        </div>
        <Tabs />
        <StatusBar />
      </div>
      <Dock />
    </div>
  );
}
